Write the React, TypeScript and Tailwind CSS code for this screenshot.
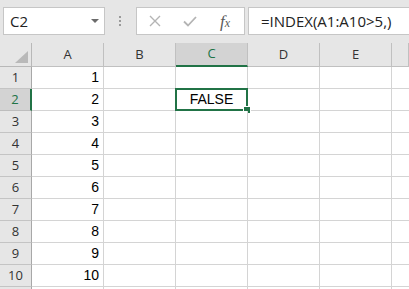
const COLS = ["A", "B", "C", "D", "E", ""];
const ROWS = [1, 2, 3, 4, 5, 6, 7, 8, 9, 10, 11];

const uiFont = { fontFamily: '"Open Sans", "Noto Sans", sans-serif' };
const cellFont = { fontFamily: '"Liberation Sans", Arial, sans-serif' };

function Dots() {
  return (
    <div className="flex w-[31px] h-[28px] items-center justify-center pr-[1px]">
      <div className="flex flex-col gap-[2px]">
        <span className="block w-[2px] h-[2px] bg-[#9a9a9a]" />
        <span className="block w-[2px] h-[2px] bg-[#9a9a9a]" />
        <span className="block w-[2px] h-[2px] bg-[#9a9a9a]" />
      </div>
    </div>
  );
}

function FormulaButtons() {
  return (
    <div className="flex w-[109px] h-[28px] items-center border border-[#c6c6c6] bg-white">
      <svg width="12" height="12" viewBox="0 0 12 12" className="ml-[12px]">
        <path d="M1 1 L11 11 M11 1 L1 11" stroke="#b4b4b4" strokeWidth="1.4" fill="none" />
      </svg>
      <svg width="14" height="11" viewBox="0 0 14 11" className="ml-[22px]">
        <path d="M1 5.5 L5 9.5 L13 1" stroke="#b4b4b4" strokeWidth="1.8" fill="none" />
      </svg>
      <span
        className="ml-[23px] text-[17px] italic text-[#5a5a5a] leading-none"
        style={{ fontFamily: '"Liberation Serif", "DejaVu Serif", serif' }}
      >
        f<span className="text-[12px]">x</span>
      </span>
    </div>
  );
}

function TopBar() {
  return (
    <div className="flex h-[43px] items-start bg-[#e6e6e6] pt-[7px] pl-[3px]" style={uiFont}>
      <div className="flex w-[102px] h-[28px] items-center justify-between border border-[#c6c6c6] bg-white pl-[6px] pr-[5px]">
        <span className="text-[15px] text-[#222]">C2</span>
        <svg width="8" height="4" viewBox="0 0 8 4">
          <path d="M0 0 L8 0 L4 4 Z" fill="#6b6b6b" />
        </svg>
      </div>
      <Dots />
      <FormulaButtons />
      <div className="ml-[3px] flex flex-1 h-[28px] items-center border border-r-0 border-[#c6c6c6] bg-white pl-[12px]">
        <span className="text-[15px] text-[#222]">=INDEX(A1:A10&gt;5,)</span>
      </div>
    </div>
  );
}

function HeaderRow() {
  return (
    <div className="grid grid-cols-[32px_72px_72px_72px_72px_72px_1fr] h-[24px] bg-[#e6e6e6]" style={uiFont}>
      <div className="relative border-r border-b border-[#b8b8b8]">
        <svg width="13" height="12" viewBox="0 0 13 12" className="absolute right-[3px] bottom-[3px]">
          <path d="M13 0 L13 12 L0 12 Z" fill="#b9b9b9" />
        </svg>
      </div>
      {COLS.map((c) =>
        c === "C" ? (
          <div
            key="C"
            className="flex items-center justify-center border-r border-[#c0c0c0] border-b-2 border-b-[#217346] bg-[#d3d3d3] text-[13px] text-[#217346]"
          >
            C
          </div>
        ) : (
          <div
            key={c || "F"}
            className="flex items-center justify-center border-r border-b border-[#c0c0c0] text-[13px] text-[#333]"
          >
            {c}
          </div>
        )
      )}
    </div>
  );
}

function DataRow({ n }: { n: number }) {
  const active = n === 2;
  return (
    <div className="grid grid-cols-[32px_72px_72px_72px_72px_72px_1fr] h-[22px]">
      <div
        className={
          active
            ? "flex items-center justify-center border-b border-[#bdbdbd] border-r-2 border-r-[#217346] bg-[#d3d3d3] text-[13px] text-[#217346]"
            : "flex items-center justify-center border-b border-[#c4c4c4] border-r border-r-[#a8a8a8] bg-[#e6e6e6] text-[13px] text-[#333]"
        }
        style={uiFont}
      >
        {n <= 10 ? n : ""}
      </div>
      <div
        className="flex items-center justify-end border-r border-b border-[#d4d4d4] bg-white pr-[4px] text-[14px] text-black"
        style={cellFont}
      >
        {n <= 10 ? n : ""}
      </div>
      <div className="border-r border-b border-[#d4d4d4] bg-white" />
      <div className="relative border-r border-b border-[#d4d4d4] bg-white" style={cellFont}>
        {active && (
          <>
            <div className="absolute left-[-1px] top-[-1px] right-[-1px] bottom-[-1px] flex items-center justify-center border-2 border-[#217346] text-[14px] text-black">
              FALSE
            </div>
            <div className="absolute right-[-4px] bottom-[-4px] h-[6px] w-[6px] border border-white bg-[#217346] box-content" />
          </>
        )}
      </div>
      <div className="border-r border-b border-[#d4d4d4] bg-white" />
      <div className="border-r border-b border-[#d4d4d4] bg-white" />
      <div className="border-b border-[#d4d4d4] bg-white" />
    </div>
  );
}

export default function App() {
  return (
    <div className="h-[289px] w-[409px] overflow-hidden bg-white">
      <TopBar />
      <HeaderRow />
      {ROWS.map((n) => (
        <DataRow key={n} n={n} />
      ))}
    </div>
  );
}
